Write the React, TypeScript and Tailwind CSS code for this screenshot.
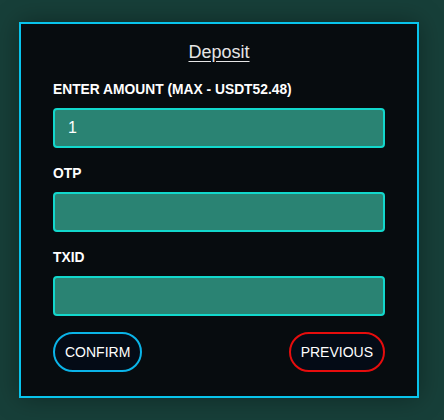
import React, { useState } from "react";

export default function App() {
  const [amount, setAmount] = useState("1");
  const [otp, setOtp] = useState("");
  const [txid, setTxid] = useState("");

  return (
    <div className="w-[444px] h-[420px] bg-[#173f39] pt-[22px] pl-[19px] font-['Liberation_Sans',Arial,sans-serif]">
      <div className="w-[400px] h-[376px] border-2 border-[#08c4ec] bg-[#070c0f] shadow-[0_0_24px_rgba(0,0,0,0.35)] px-[32px] pt-[14px] flex flex-col">
        <h2 className="text-center text-[18px] leading-[28px] text-[#e6e6e6] underline underline-offset-[3px]">
          Deposit
        </h2>

        <label className="mt-[16px] text-[13.8px] leading-[16px] font-bold text-white">
          ENTER AMOUNT (MAX - USDT52.48)
        </label>
        <input
          value={amount}
          onChange={(e) => setAmount(e.target.value)}
          className="mt-[10px] h-[40px] w-full rounded-[4px] border-2 border-[#12d8cc] bg-[#2a8373] px-[13px] text-[16px] text-white outline-none"
        />

        <label className="mt-[18px] text-[13.8px] leading-[16px] font-bold text-white">OTP</label>
        <input
          value={otp}
          onChange={(e) => setOtp(e.target.value)}
          className="mt-[10px] h-[40px] w-full rounded-[4px] border-2 border-[#12d8cc] bg-[#2a8373] px-[13px] text-[16px] text-white outline-none"
        />

        <label className="mt-[18px] text-[13.8px] leading-[16px] font-bold text-white">TXID</label>
        <input
          value={txid}
          onChange={(e) => setTxid(e.target.value)}
          className="mt-[10px] h-[40px] w-full rounded-[4px] border-2 border-[#12d8cc] bg-[#2a8373] px-[13px] text-[16px] text-white outline-none"
        />

        <div className="mt-[16px] flex justify-between items-center">
          <button className="h-[40px] px-[10px] rounded-full border-2 border-[#0ab4e8] bg-[#040b16] text-[14px] text-white">
            CONFIRM
          </button>
          <button className="h-[40px] px-[10px] rounded-full border-2 border-[#e60d0d] bg-[#040b16] text-[14px] text-white">
            PREVIOUS
          </button>
        </div>
      </div>
    </div>
  );
}
